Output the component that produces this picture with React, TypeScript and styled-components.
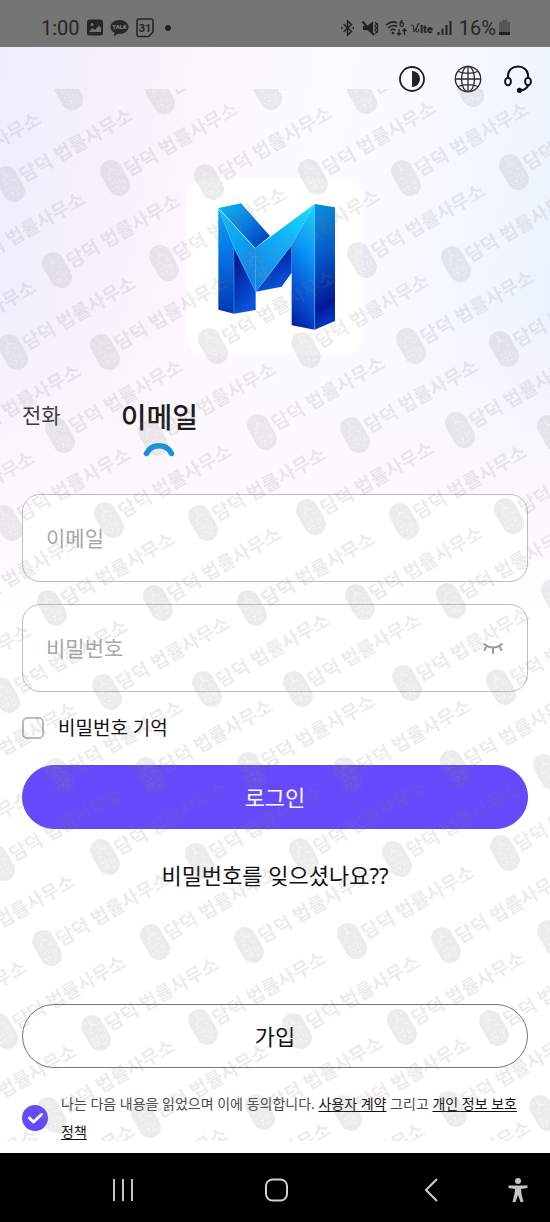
import React, { useState } from "react";
import styled, { createGlobalStyle } from "styled-components";

const GlobalStyle = createGlobalStyle`
  *, *::before, *::after { box-sizing: border-box; }
  body { margin: 0; background: #fff; }
  body, button, input {
    font-family: "Noto Sans", "Noto Sans CJK KR", sans-serif;
    color: #111;
  }
`;

const Page = styled.div`
  display: flex;
  flex-direction: column;
  min-height: 100vh;
`;

const StatusBar = styled.div`
  display: flex;
  justify-content: space-between;
  align-items: center;
  height: 47px;
  padding: 8px 40px 0 41px;
  background: #757575;
  color: #262626;
  font-family: Roboto, sans-serif;
  font-size: 20px;
  line-height: 24px;
`;

const StatusGroup = styled.div<{ $gap: number }>`
  display: flex;
  align-items: center;
  gap: ${(p) => p.$gap}px;
`;

const Screen = styled.main`
  position: relative;
  flex: 1;
  display: flex;
  flex-direction: column;
  padding: 0 22px 7px;
  background:
    linear-gradient(to bottom, rgba(255, 255, 255, 0) 0, rgba(255, 255, 255, 0) 260px, rgba(253, 248, 253, 0.9) 440px, #fff 580px),
    linear-gradient(98deg, #eeeeff 0%, #f7f1fc 20%, #fcf8fd 32%, #fafcff 48%, #f5f9ff 65%, #e9f0ff 90%, #ebf0fe 100%);
`;

const Header = styled.header`
  display: flex;
  justify-content: flex-end;
  align-items: center;
  height: 64px;
  margin-right: -4px;
`;

const IconButton = styled.button<{ $space?: number }>`
  display: flex;
  padding: 0;
  margin-left: ${(p) => p.$space || 0}px;
  border: 0;
  background: none;
  cursor: pointer;
`;

const LogoTile = styled.div`
  align-self: center;
  width: 176px;
  height: 176px;
  margin-top: 68px;
  border-radius: 18px;
  background: #fff;
  overflow: hidden;
`;

const Tabs = styled.div`
  display: flex;
  align-items: flex-start;
  gap: 60px;
  height: 106px;
  margin-top: 33px;
`;

const Tab = styled.button<{ $active?: boolean }>`
  display: flex;
  flex-direction: column;
  align-items: center;
  gap: 3px;
  padding: ${(p) => (p.$active ? 9 : 12)}px 0 0;
  border: 0;
  background: none;
  font-size: ${(p) => (p.$active ? 28 : 21)}px;
  line-height: ${(p) => (p.$active ? 40 : 30)}px;
  font-weight: ${(p) => (p.$active ? 500 : 400)};
  color: ${(p) => (p.$active ? "#1c1c1e" : "#3c3c40")};
  cursor: pointer;
`;

const Field = styled.label`
  display: flex;
  align-items: center;
  height: 88px;
  margin-bottom: 22px;
  padding: 0 23px;
  border: 1px solid #bdbdbf;
  border-radius: 18px;
  background: #fff;
`;

const FieldInput = styled.input`
  flex: 1;
  min-width: 0;
  padding: 0;
  border: 0;
  outline: 0;
  background: none;
  font-size: 21px;
  line-height: 32px;
  &::placeholder { color: #a8a8a8; opacity: 1; }
`;

const Remember = styled.label`
  display: flex;
  align-items: center;
  gap: 14px;
  height: 28px;
  font-size: 19px;
  line-height: 28px;
  color: #111;
`;

const RememberBox = styled.input`
  appearance: none;
  width: 22px;
  height: 22px;
  margin: 0;
  border: 2px solid #bcbcbc;
  border-radius: 5px;
  &:checked { background: #6649f8; border-color: #6649f8; }
`;

const WideButton = styled.button<{ $primary?: boolean }>`
  height: 64px;
  margin-top: ${(p) => (p.$primary ? 23 : 0)}px;
  border: 1px solid ${(p) => (p.$primary ? "#6248ec" : "#777")};
  border-radius: 32px;
  background: ${(p) => (p.$primary ? "#6649fa" : "#fff")};
  color: ${(p) => (p.$primary ? "#fff" : "#111")};
  font-size: 22px;
  line-height: 32px;
  cursor: pointer;
`;

const Forgot = styled.a`
  align-self: center;
  margin: 30px 0 auto;
  font-size: 22px;
  line-height: 32px;
  color: #111;
  text-decoration: none;
`;

const Agreement = styled.div`
  display: flex;
  align-items: center;
  gap: 13px;
  margin-top: 22px;
  font-size: 14px;
  line-height: 28px;
  color: #4a4a4a;
  word-break: keep-all;
  label { flex: 1; }
  a { color: #111; text-underline-offset: 2px; }
`;

const AgreeBox = styled.span`
  display: grid;
  flex: none;
  width: 26px;
  height: 26px;
  > * { grid-area: 1 / 1; }
  svg { pointer-events: none; }
`;

const AgreeInput = styled.input`
  appearance: none;
  width: 26px;
  height: 26px;
  margin: 0;
  border: 2px solid #bcbcbc;
  border-radius: 50%;
  &:checked { background: #6649f8; border-color: #6649f8; }
`;

const WatermarkLayer = styled.svg`
  position: absolute;
  left: 0;
  top: 42px;
  width: 100%;
  height: calc(100% - 54px);
  overflow: hidden;
  pointer-events: none;
`;

const NavBar = styled.nav`
  display: grid;
  grid-template-columns: 92px 1fr auto 1fr 92px;
  align-items: center;
  height: 69px;
  padding-top: 4px;
  background: #000;
`;

const NavButton = styled.button<{ $col: number; $side?: string }>`
  grid-column: ${(p) => p.$col};
  justify-self: ${(p) => p.$side || "center"};
  display: flex;
  padding: 0;
  border: 0;
  background: none;
  cursor: pointer;
`;

const stamps: [number, number][] = [
  [68, 92], [160, 96], [267, 92], [362, 96], [469, 89],
  [-82, 188], [10, 184], [115, 178], [209, 182], [313, 177], [406, 178], [514, 172],
  [-38, 268], [57, 270], [164, 263], [257, 265], [362, 260], [456, 264],
  [-87, 356], [13, 352], [105, 352], [213, 346], [306, 350], [411, 346], [504, 349],
  [-42, 440], [60, 435], [153, 438], [262, 432], [355, 435], [460, 430], [552, 433],
  [-88, 527], [8, 523], [109, 520], [203, 523], [311, 517], [404, 521], [509, 516],
  [-42, 610], [52, 608], [158, 603], [252, 608], [360, 602], [451, 601], [556, 597],
  [-92, 700], [5, 695], [107, 692], [207, 689], [298, 689], [407, 683], [501, 687],
  [-46, 778], [60, 776], [150, 775], [252, 770], [348, 775], [455, 768], [548, 772],
  [-92, 867], [0, 863], [105, 857], [200, 861], [304, 856], [397, 859], [505, 853],
  [-48, 950], [47, 948], [155, 942], [249, 945], [352, 941], [446, 945], [552, 938],
  [-96, 1036], [3, 1031], [96, 1033], [203, 1027], [297, 1031], [402, 1027], [494, 1028],
  [-46, 1120], [52, 1115], [146, 1120], [260, 1112], [347, 1113], [452, 1109], [544, 1113],
  [-85, 1204], [12, 1200], [105, 1203], [208, 1198], [302, 1199], [408, 1196], [502, 1198],
];

const Watermark = () => (
  <WatermarkLayer aria-hidden="true">
    <g transform="translate(0 -89)" fill="#808080" opacity="0.15">
      {stamps.map(([x, y]) => (
        <g key={`${x}-${y}`} transform={`translate(${x} ${y}) rotate(-30)`}>
          <rect x="-11" y="-19" width="22" height="38" rx="11" />
          <path
            d="M0-16v7l-5 4M0-10l5 4M-7-2h5M3-3l4 3M-1 1v5M-7 4h4M3 3v7M6 5v5M-5 8l4 1-3 4M0 13h5M-8 8l2 3"
            fill="none"
            stroke="#fff"
            strokeOpacity="0.5"
            strokeWidth="1"
          />
          <text x="13" y="6" fontSize="19" fontWeight="700">담덕 법률사무소</text>
        </g>
      ))}
    </g>
  </WatermarkLayer>
);

const Logo = () => (
  <svg width="176" height="176" viewBox="51 39 528 528" role="img" aria-label="M">
    <defs>
      <linearGradient id="pillar" x1="0" y1="0" x2="0" y2="1">
        <stop offset="0" stopColor="#0aa5f2" /><stop offset="0.4" stopColor="#0877e8" />
        <stop offset="1" stopColor="#0336b4" />
      </linearGradient>
      <linearGradient id="inner" x1="0" y1="0" x2="0.4" y2="1">
        <stop offset="0" stopColor="#03108c" /><stop offset="0.4" stopColor="#0428a4" />
        <stop offset="1" stopColor="#0854dc" />
      </linearGradient>
      <linearGradient id="band" x1="0" y1="0" x2="1" y2="1">
        <stop offset="0" stopColor="#12b8f4" /><stop offset="0.5" stopColor="#087ce0" />
        <stop offset="1" stopColor="#0332b4" />
      </linearGradient>
      <linearGradient id="slope" x1="0" y1="0" x2="0.6" y2="1">
        <stop offset="0" stopColor="#10c4f8" /><stop offset="1" stopColor="#0a84f0" />
      </linearGradient>
      <linearGradient id="rise" x1="1" y1="0" x2="0" y2="1">
        <stop offset="0" stopColor="#1ce4f8" /><stop offset="0.4" stopColor="#10b8fa" />
        <stop offset="1" stopColor="#0a80ee" />
      </linearGradient>
      <linearGradient id="front" x1="0.6" y1="0" x2="0.4" y2="1">
        <stop offset="0" stopColor="#16ccf8" /><stop offset="0.3" stopColor="#0aa0fa" />
        <stop offset="0.65" stopColor="#0760dc" /><stop offset="1" stopColor="#0224ac" />
      </linearGradient>
      <linearGradient id="side" x1="0" y1="0" x2="0.1" y2="1">
        <stop offset="0" stopColor="#0890dc" /><stop offset="0.4" stopColor="#0660cc" />
        <stop offset="0.85" stopColor="#021898" /><stop offset="1" stopColor="#0538c0" />
      </linearGradient>
    </defs>
    <path d="M145 126L192 245V443L145 431Z" fill="url(#pillar)" />
    <path d="M192 245L257 375V432L192 443Z" fill="url(#inner)" />
    <path d="M145 126L213 112L300 210L255 247Z" fill="url(#band)" />
    <path d="M257 377L365 237V320L335 362Z" fill="url(#inner)" />
    <path d="M145 126L255 247L257 377L192 245Z" fill="url(#slope)" />
    <path d="M255 247L434 114L365 237L257 377Z" fill="url(#rise)" />
    <path d="M434 114V491L365 478V237Z" fill="url(#front)" />
    <path d="M434 114L495 124V465L434 491Z" fill="url(#side)" />
    <path d="M192 245V443M434 114V491M257 377L365 237M192 245L257 377" fill="none" stroke="#5ccaff" strokeOpacity="0.6" strokeWidth="2" />
    <path d="M145 126L255 247" fill="none" stroke="#8ff0ff" strokeWidth="3" />
  </svg>
);

const ContrastIcon = () => (
  <svg width="28" height="28" viewBox="0 0 28 28">
    <circle cx="14" cy="14" r="12" fill="none" stroke="#222" strokeWidth="1.800" />
    <path d="M14 6a8 8 0 0 1 0 16z" fill="#222" />
  </svg>
);

const GlobeIcon = () => (
  <svg width="28" height="28" viewBox="0 0 28 28" fill="none" stroke="#2a2a2a" strokeWidth="1.300">
    <circle cx="14" cy="14" r="12.700" />
    <ellipse cx="14" cy="14" rx="6.500" ry="12.700" />
    <path d="M14 1v26M1 14h26M4 6.500q10 3.600 20 0M4 21.500q10-3.600 20 0" />
  </svg>
);

const HeadsetIcon = () => (
  <svg width="28" height="28" viewBox="0 0 28 28" fill="none" stroke="#111" strokeWidth="2" strokeLinecap="round">
    <path d="M4 12.500V10.500C4 5 8.500 1.500 14 1.500S24 5 24 10.500V12.500M24.500 20Q22 25 16.500 25.500" />
    <ellipse cx="4" cy="16.500" rx="2.900" ry="3.800" />
    <ellipse cx="24" cy="16.500" rx="2.900" ry="3.800" />
    <circle cx="15.500" cy="25.300" r="1.600" fill="#111" />
  </svg>
);

const LeftStatusIcons = () => (
  <>
    <svg width="16" height="17" viewBox="0 0 16 17">
      <rect y="0.500" width="16" height="16" rx="2.500" fill="#262626" />
      <circle cx="5" cy="5.500" r="1.500" fill="#757575" />
      <path d="M2 13l3.500-4 2.500 2 4-4.500 2 2.500v4z" fill="#757575" />
    </svg>
    <svg width="19" height="18" viewBox="0 0 19 18">
      <path d="M9.500 1C4.500 1 .5 4 .5 8c0 2.600 1.700 4.700 4 5.800L3.700 17.500l4.200-2.700 1.600.1c5 0 9-3 9-7S14.500 1 9.500 1z" fill="#262626" />
      <text x="9.500" y="10.300" textAnchor="middle" fontSize="6" fontWeight="700" fill="#8c8c8c">TALK</text>
    </svg>
    <svg width="18" height="20" viewBox="0 0 18 20">
      <path d="M1 3a2 2 0 0 1 2-2h12a2 2 0 0 1 2 2v11l-4.500 4.500H3a2 2 0 0 1-2-2z" fill="none" stroke="#262626" strokeWidth="1.600" />
      <text x="9" y="13.500" textAnchor="middle" fontSize="11" fontWeight="700" fill="#262626">31</text>
    </svg>
  </>
);

const RightStatusIcons = () => (
  <svg width="112" height="20" viewBox="0 0 112 20" fill="none" stroke="#222" strokeWidth="1.500">
    <path d="M3.500 6L11.500 13.500L7.500 17V3L11.500 6.500L3.500 14" />
    <path d="M1 10h1.500M12.500 10h1.500" strokeWidth="2" />
    <path d="M23 8h4l6-4.500v13L27 12h-4z" fill="#222" stroke="none" />
    <path d="M22.500 3.500L34 17" strokeWidth="2" />
    <path d="M35 4l1.500 2-1.500 2 1.500 2-1.500 2 1.500 2-1.500 2M37.500 5v10" strokeWidth="1.200" />
    <path d="M46 7Q52 2 57 5M48 10Q53 6 57 8.500M50.500 12.500Q53 10.500 55.500 12" />
    <circle cx="53" cy="15" r="1.300" fill="#222" stroke="none" />
    <path d="M59 11v6M57 15l2 2 2-2M64.500 17v-6M62.500 13l2-2 2 2" strokeWidth="1.300" />
    <text x="59" y="9" fontSize="9" fontWeight="700" fill="#222" stroke="none">6</text>
    <path d="M71 8q2-2 2.500 0l.5 6 5-9q-3 5-3 7.500 0 2.500 2 1.500 1.500-1 .5-3" strokeWidth="1" />
    <text x="80" y="15" fontSize="11" fontWeight="900" fill="#222" stroke="none">lte</text>
    <path d="M98.500 14v3M102.500 10.500V17M106.500 7V17M110.500 3V17" strokeWidth="2" />
  </svg>
);

export default function App() {
  const [agreed, setAgreed] = useState(true);
  return (
    <Page>
      <GlobalStyle />
      <StatusBar>
        <StatusGroup $gap={7}>
          <span>1:00</span>
          <LeftStatusIcons />
          <svg width="20" height="6" viewBox="0 0 20 6"><circle cx="7" cy="3" r="3" fill="#222" /></svg>
        </StatusGroup>
        <StatusGroup $gap={7}>
          <RightStatusIcons />
          <StatusGroup $gap={3}>
            <span>16%</span>
            <svg width="11" height="17" viewBox="0 0 11 17">
              <path d="M3 1h5v2h3v13H0V3h3z" fill="#555" />
              <path d="M0 13h11v3H0z" fill="#222" />
            </svg>
          </StatusGroup>
        </StatusGroup>
      </StatusBar>

      <Screen>
        <Header>
          <IconButton aria-label="테마"><ContrastIcon /></IconButton>
          <IconButton aria-label="언어" $space={28}><GlobeIcon /></IconButton>
          <IconButton aria-label="고객 지원" $space={22}><HeadsetIcon /></IconButton>
        </Header>

        <LogoTile><Logo /></LogoTile>

        <Tabs role="tablist">
          <Tab role="tab" aria-selected="false">전화</Tab>
          <Tab role="tab" aria-selected="true" $active>
            이메일
            <svg width="32" height="18" viewBox="0 0 32 18">
              <path d="M3.500 13.500A14 14 0 0 1 28.500 13.500" fill="none" stroke="#0c95da" strokeWidth="5.500" strokeLinecap="round" />
            </svg>
          </Tab>
        </Tabs>

        <Field>
          <FieldInput type="email" placeholder="이메일" aria-label="이메일" />
        </Field>
        <Field>
          <FieldInput type="password" placeholder="비밀번호" aria-label="비밀번호" />
          <IconButton type="button" aria-label="비밀번호 표시">
            <svg width="22" height="14" viewBox="0 0 22 14" fill="none" stroke="#999" strokeWidth="2" strokeLinecap="round">
              <path d="M2 3Q11 10 20 3M4.500 5.500L2.500 9M11 7v5M17.500 5.500L19.500 9" />
            </svg>
          </IconButton>
        </Field>

        <Remember>
          <RememberBox type="checkbox" />
          비밀번호 기억
        </Remember>

        <WideButton $primary>로그인</WideButton>
        <Forgot href="#forgot">비밀번호를 잊으셨나요??</Forgot>
        <WideButton>가입</WideButton>

        <Agreement>
          <AgreeBox>
            <AgreeInput id="agree" type="checkbox" checked={agreed} onChange={(e) => setAgreed(e.target.checked)} />
            <svg width="26" height="26" viewBox="0 0 26 26">
              <path d="M7.500 13l4 4 8-7.500" fill="none" stroke="#fff" strokeWidth="3" strokeLinecap="round" strokeLinejoin="round" />
            </svg>
          </AgreeBox>
          <label htmlFor="agree">
            나는 다음 내용을 읽었으며 이에 동의합니다. <a href="#terms">사용자 계약</a> 그리고{" "}
            <a href="#privacy">개인 정보 보호 정책</a>
          </label>
        </Agreement>
        <Watermark />
      </Screen>

      <NavBar>
        <NavButton $col={2} $side="start" aria-label="최근 앱">
          <svg width="62" height="26" viewBox="0 0 62 26" stroke="#c4c4c4" strokeWidth="2">
            <path d="M22 2v22M31 2v22M40 2v22" />
          </svg>
        </NavButton>
        <NavButton $col={3} aria-label="홈">
          <svg width="26" height="26" viewBox="0 0 26 26">
            <rect x="4" y="2.500" width="21" height="21" rx="6.500" fill="none" stroke="#d0d0d0" strokeWidth="2" />
          </svg>
        </NavButton>
        <NavButton $col={4} $side="end" aria-label="뒤로">
          <svg width="42" height="26" viewBox="0 0 42 26">
            <path d="M21 2L10 13l11 11" fill="none" stroke="#d0d0d0" strokeWidth="2" />
          </svg>
        </NavButton>
        <NavButton $col={5} aria-label="접근성">
          <svg width="48" height="28" viewBox="0 0 48 28" fill="#c4c4c4">
            <circle cx="38" cy="5" r="3" />
            <path d="M28.500 9.500h19v2.500l-6.500 1 .5 5 2 8h-3l-2.500-7-2.500 7h-3l2-8 .5-5-6.500-1z" />
          </svg>
        </NavButton>
      </NavBar>
    </Page>
  );
}
